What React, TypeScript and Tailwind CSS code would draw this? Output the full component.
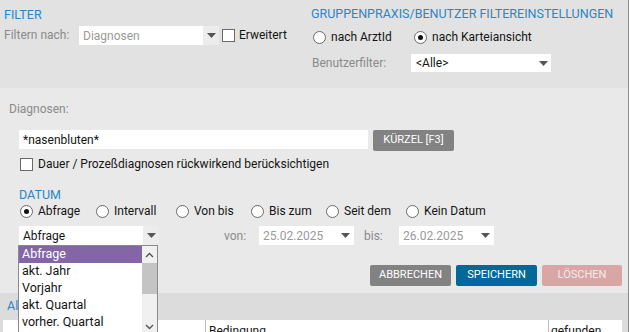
import React from "react";

const Arrow = () => (
  <svg width="9" height="5" viewBox="0 0 9 5" className="block">
    <polygon points="0,0 9,0 4.5,5" fill="#555" />
  </svg>
);

const Radio = ({ checked = false }: { checked?: boolean }) => (
  <span className="w-[13px] h-[13px] rounded-full border border-[#6a6a6a] bg-white flex items-center justify-center shrink-0">
    {checked && <span className="w-[5px] h-[5px] rounded-full bg-[#111]" />}
  </span>
);

const Check = () => (
  <span className="block w-[13px] h-[13px] border border-[#6a6a6a] bg-white shrink-0" />
);

export default function App() {
  const datumRadios: { label: string; w: string; checked?: boolean }[] = [
    { label: "Abfrage", w: "w-[76px]", checked: true },
    { label: "Intervall", w: "w-[80px]" },
    { label: "Von bis", w: "w-[75px]" },
    { label: "Bis zum", w: "w-[75px]" },
    { label: "Seit dem", w: "w-[80px]" },
    { label: "Kein Datum", w: "w-[90px]" },
  ];
  const items = ["Abfrage", "akt. Jahr", "Vorjahr", "akt. Quartal", "vorher. Quartal"];

  return (
    <div className="relative w-[629px] h-[332px] overflow-hidden border-r border-[#8c8c8c] font-['Roboto',sans-serif] text-[12px] text-[#151515]">
      {/* Top filter area */}
      <div className="flex h-[88px] bg-[#e2e2e2]">
        <div className="w-[311px] pl-[4px]">
          <div className="pt-[8px] leading-[14px] text-[12.5px] text-[#2a86c8]">FILTER</div>
          <div className="mt-[4px] flex items-center h-[19px]">
            <span className="w-[75px] text-[#8a8a8a] leading-[15px]">Filtern nach:</span>
            <div className="flex h-[19px] w-[140px] shrink-0">
              <div className="w-[124px] bg-white pl-[4px] flex items-center text-[#9a9a9a]">Diagnosen</div>
              <div className="w-[16px] bg-[#ececec] flex items-center justify-center"><Arrow /></div>
            </div>
            <span className="ml-[3px]"><Check /></span>
            <span className="ml-[4px] leading-[15px]">Erweitert</span>
          </div>
        </div>
        <div className="flex-1">
          <div className="pt-[7px] leading-[14px] text-[12.5px] text-[#2a86c8]">GRUPPENPRAXIS/BENUTZER FILTEREINSTELLUNGEN</div>
          <div className="mt-[7px] h-[18px] flex items-center pl-[2px]">
            <div className="w-[101px] flex items-center gap-[5px]"><Radio /><span>nach ArztId</span></div>
            <div className="flex items-center gap-[5px]"><Radio checked /><span>nach Karteiansicht</span></div>
          </div>
          <div className="mt-[8px] h-[18px] flex items-center pl-[1px]">
            <span className="w-[99px] text-[#8a8a8a]">Benutzerfilter:</span>
            <div className="w-[140px] h-[18px] bg-white flex items-center justify-between pl-[5px] pr-[3px]">
              <span>&lt;Alle&gt;</span>
              <Arrow />
            </div>
          </div>
        </div>
      </div>

      {/* Dialog */}
      <div className="h-[205px] bg-[#e9e9e9]">
        <div className="pl-[9px] pt-[14px] leading-[15px] text-[#8a8a8a]">Diagnosen:</div>
        <div className="mt-[13px] flex items-start pl-[19px]">
          <div className="w-[349px] h-[19px] bg-white pl-[4px] flex items-center">*nasenbluten*</div>
          <button className="ml-[5px] w-[81px] h-[21px] rounded-[2px] bg-[#828282] text-white text-[11px] flex items-center justify-center">KÜRZEL [F3]</button>
        </div>
        <div className="mt-[4px] h-[18px] flex items-center pl-[20px] gap-[5px]">
          <Check />
          <span>Dauer / Prozeßdiagnosen rückwirkend berücksichtigen</span>
        </div>
        <div className="mt-[15px] pl-[19px] leading-[14px] text-[12.5px] text-[#2a86c8]">DATUM</div>
        <div className="h-[18px] flex items-center pl-[20px]">
          {datumRadios.map((r) => (
            <div key={r.label} className={`${r.w} flex items-center gap-[5px] shrink-0`}>
              <Radio checked={r.checked} />
              <span>{r.label}</span>
            </div>
          ))}
        </div>
        <div className="mt-[6px] h-[19px] flex items-center pl-[19px]">
          <div className="flex h-[19px] w-[140px]">
            <div className="w-[124px] bg-white pl-[4px] flex items-center">Abfrage</div>
            <div className="w-[16px] bg-[#ececec] flex items-center justify-center"><Arrow /></div>
          </div>
          <span className="ml-[65px] w-[35px] text-[#8a8a8a]">von:</span>
          <div className="w-[95px] h-[19px] bg-white flex items-center justify-between pl-[4px] pr-[4px] text-[#9a9a9a]">
            <span>25.02.2025</span>
            <Arrow />
          </div>
          <span className="ml-[10px] w-[35px] text-[#8a8a8a]">bis:</span>
          <div className="w-[95px] h-[19px] bg-white flex items-center justify-between pl-[4px] pr-[4px] text-[#9a9a9a]">
            <span>26.02.2025</span>
            <Arrow />
          </div>
        </div>
        <div className="mt-[20px] h-[21px] flex justify-end pr-[6px] gap-[5px] text-[11px]">
          <button className="w-[81px] h-[21px] rounded-[2px] bg-[#828282] text-white">ABBRECHEN</button>
          <button className="w-[81px] h-[21px] rounded-[2px] bg-[#00699c] text-white">SPEICHERN</button>
          <button className="w-[80px] h-[21px] rounded-[2px] bg-[#d9a6a6] text-[#f6eaea]">LÖSCHEN</button>
        </div>
      </div>

      {/* Results area */}
      <div className="h-[27px] bg-[#dcdcdc] flex items-center pl-[7px] text-[12.5px] text-[#2a86c8]">Al</div>
      <div className="h-[20px] bg-[#dcdcdc] flex pl-[3px] pr-[6px]">
        <div className="w-[202px] bg-white" />
        <div className="w-[343px] bg-white border-l border-[#bdbdbd] pl-[3px] pt-[4px] leading-[15px]">Bedingung</div>
        <div className="w-[74px] bg-white border-l border-[#bdbdbd] pl-[2px] pt-[4px] leading-[15px]">gefunden</div>
      </div>

      {/* Open dropdown list */}
      <div className="absolute left-[18px] top-[245px] w-[140px] h-[90px] border border-[#8a8a8a] bg-white flex">
        <div className="w-[123px]">
          {items.map((it, i) => (
            <div
              key={it}
              className={`h-[17px] flex items-center pl-[3px] text-[12.5px] ${i === 0 ? "bg-[#8465a8] text-white" : "text-[#151515]"}`}
            >
              {it}
            </div>
          ))}
        </div>
        <div className="w-[15px] bg-[#f0f0f0] flex flex-col items-center">
          <div className="h-[17px] flex items-center justify-center">
            <svg width="9" height="6" viewBox="0 0 9 6"><polyline points="1,5 4.5,1.5 8,5" fill="none" stroke="#555" strokeWidth="1.4" /></svg>
          </div>
          <div className="w-[15px] h-[31px] bg-[#c4c4c4]" />
          <div className="h-[28px]" />
          <div className="h-[10px] flex items-center justify-center">
            <svg width="9" height="6" viewBox="0 0 9 6"><polyline points="1,1 4.5,4.5 8,1" fill="none" stroke="#555" strokeWidth="1.4" /></svg>
          </div>
        </div>
      </div>
    </div>
  );
}
